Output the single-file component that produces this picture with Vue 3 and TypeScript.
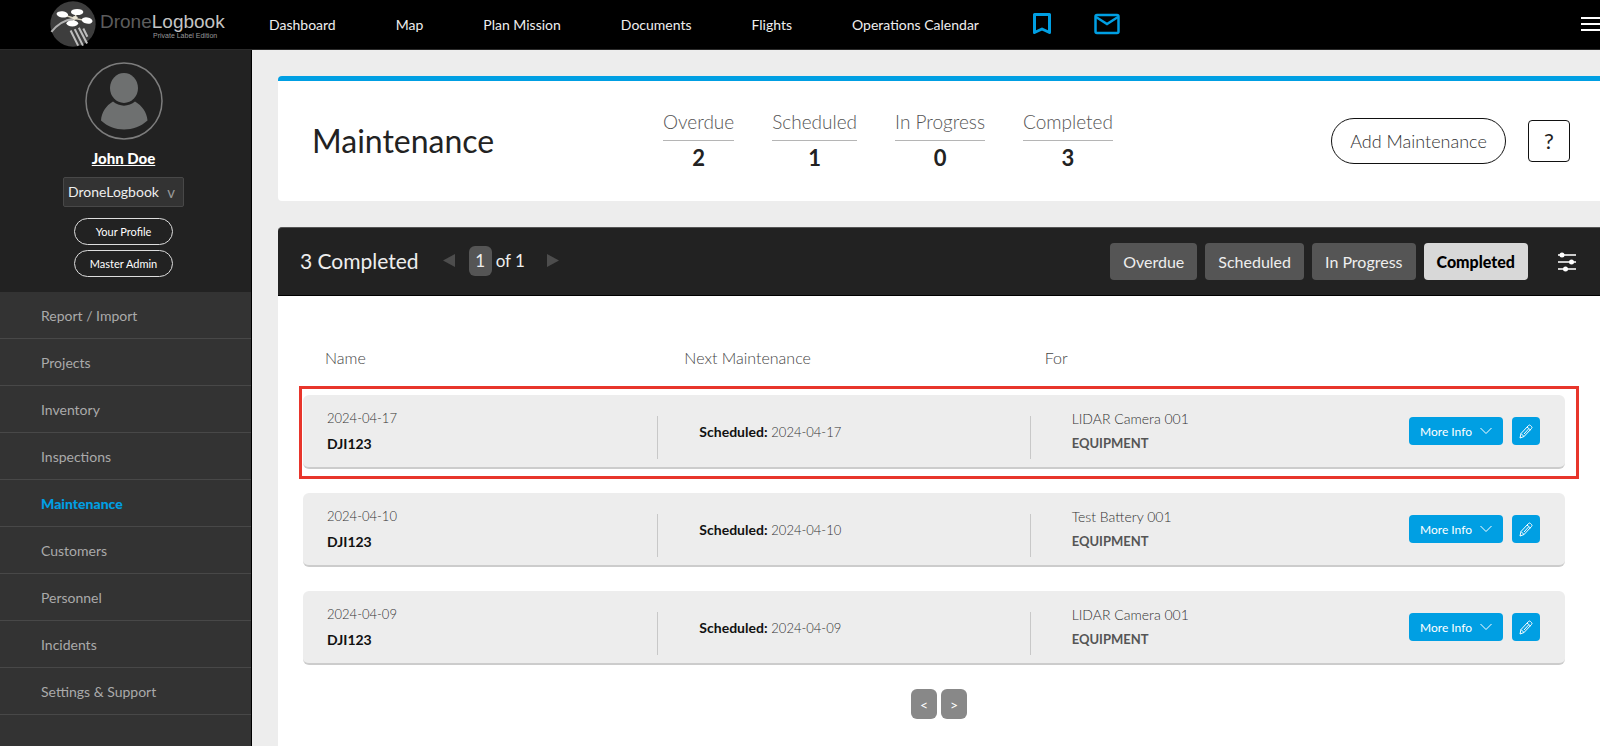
<script setup lang="ts">
import { ref } from 'vue'

interface Stat {
  label: string
  count: number
}

interface MaintenanceRow {
  date: string
  name: string
  target: string
  kind: string
  highlighted: boolean
}

const navLinks: string[] = ['Dashboard', 'Map', 'Plan Mission', 'Documents', 'Flights', 'Operations Calendar']

const menuItems: string[] = [
  'Report / Import',
  'Projects',
  'Inventory',
  'Inspections',
  'Maintenance',
  'Customers',
  'Personnel',
  'Incidents',
  'Settings & Support',
]

const stats: Stat[] = [
  { label: 'Overdue', count: 2 },
  { label: 'Scheduled', count: 1 },
  { label: 'In Progress', count: 0 },
  { label: 'Completed', count: 3 },
]

const rows: MaintenanceRow[] = [
  { date: '2024-04-17', name: 'DJI123', target: 'LIDAR Camera 001', kind: 'EQUIPMENT', highlighted: true },
  { date: '2024-04-10', name: 'DJI123', target: 'Test Battery 001', kind: 'EQUIPMENT', highlighted: false },
  { date: '2024-04-09', name: 'DJI123', target: 'LIDAR Camera 001', kind: 'EQUIPMENT', highlighted: false },
]

const activeMenu = ref('Maintenance')
const activeTab = ref('Completed')
const company = ref('DroneLogbook')
</script>

<template>
  <div class="page">
    <header class="topbar">
      <a class="brand" href="#">
        <svg class="brand-mark" viewBox="0 0 134 134" aria-hidden="true">
          <circle cx="67" cy="67" r="66" fill="#3d3d3d" />
          <path d="M4 90C20 70 40 56 68 52" fill="none" stroke="#b0b0b0" stroke-width="6" />
          <path d="M60 86l22 44M72 82l24 48M84 78l24 46M97 80l12 24" stroke="#bdbdbd" stroke-width="6" />
          <path d="M36 39l36 12 34 6M78 34L66 64" fill="none" stroke="#d8d2be" stroke-width="4" />
          <ellipse cx="36" cy="39" rx="17" ry="9" fill="#fff" transform="rotate(8 36 39)" />
          <ellipse cx="79" cy="32" rx="18" ry="9" fill="#fff" />
          <ellipse cx="108" cy="57" rx="16" ry="9" fill="#fff" transform="rotate(10 108 57)" />
          <ellipse cx="65" cy="65" rx="17" ry="9" fill="#fff" />
          <ellipse cx="73" cy="49" rx="8" ry="5" fill="#e9e4d4" />
        </svg>
        <span class="brand-text">
          <span class="brand-name"><span class="brand-dim">Drone</span>Logbook</span>
          <span class="brand-sub">Private Label Edition</span>
        </span>
      </a>
      <nav class="topnav" aria-label="Main">
        <div class="links">
          <a v-for="link in navLinks" :key="link" href="#">{{ link }}</a>
        </div>
        <div class="icons">
          <a href="#" aria-label="Bookmarks">
            <svg width="20" height="24" viewBox="0 0 20 24" aria-hidden="true">
              <path d="M2.500 2.500h15v18L10 17l-7.500 3.500z" fill="none" stroke="#009fe3" stroke-width="3" stroke-linejoin="round" />
            </svg>
          </a>
          <a href="#" aria-label="Messages">
            <svg width="26" height="22" viewBox="0 0 26 22" fill="none" stroke="#009fe3" stroke-width="2.500" aria-hidden="true">
              <rect x="1.500" y="2" width="23" height="18" rx="1.500" />
              <path d="M2 4l11 7 11-7" />
            </svg>
          </a>
        </div>
      </nav>
      <button class="burger" type="button" aria-label="Open menu">
        <svg width="19" height="14" viewBox="0 0 19 14" stroke="#fff" stroke-width="2" aria-hidden="true">
          <path d="M0 1h19M0 7h19M0 13h19" />
        </svg>
      </button>
    </header>

    <div class="body">
      <aside class="sidebar">
        <div class="profile">
          <svg class="avatar" viewBox="0 0 78 78" aria-hidden="true">
            <circle cx="39" cy="39" r="38" fill="none" stroke="#7d7d7d" stroke-width="1.500" />
            <ellipse cx="39" cy="26" rx="14" ry="15" fill="#6e7070" />
            <path d="M28 39.500c6 5.500 16 5.500 22 0 7 4 12 11 12.500 19-13 12-34 12-46.500 0C16.500 50.500 21 43.500 28 39.500z" fill="#6e7070" />
          </svg>
          <a class="user" href="#">John Doe</a>
          <div class="company">
            <select v-model="company" aria-label="Company">
              <option>DroneLogbook</option>
            </select>
            <span class="caret" aria-hidden="true">v</span>
          </div>
          <button class="pill" type="button">Your Profile</button>
          <button class="pill" type="button">Master Admin</button>
        </div>
        <nav class="menu" aria-label="Sections">
          <a
            v-for="item in menuItems"
            :key="item"
            href="#"
            :class="{ active: item === activeMenu }"
            @click.prevent="activeMenu = item"
          >{{ item }}</a>
        </nav>
      </aside>

      <main class="content">
        <section class="summary">
          <h1>Maintenance</h1>
          <dl class="stats">
            <div v-for="stat in stats" :key="stat.label" class="stat">
              <dt>{{ stat.label }}</dt>
              <dd>{{ stat.count }}</dd>
            </div>
          </dl>
          <button class="add" type="button">Add Maintenance</button>
          <button class="help" type="button">?</button>
        </section>

        <section class="panel">
          <div class="toolbar">
            <h2>3 Completed</h2>
            <div class="pages">
              <button class="arrow" type="button" aria-label="Previous page">
                <svg width="12" height="14" viewBox="0 0 12 14" fill="#4d4d4d" aria-hidden="true"><path d="M12 0v13L0 6.500z" /></svg>
              </button>
              <span class="page-now">1</span>
              <span class="page-total">of 1</span>
              <button class="arrow" type="button" aria-label="Next page">
                <svg width="12" height="14" viewBox="0 0 12 14" fill="#4d4d4d" aria-hidden="true"><path d="M0 0v13l12-6.500z" /></svg>
              </button>
            </div>
            <div class="tabs">
              <button
                v-for="stat in stats"
                :key="stat.label"
                type="button"
                :class="{ active: stat.label === activeTab }"
                @click="activeTab = stat.label"
              >{{ stat.label }}</button>
            </div>
            <button class="filters" type="button" aria-label="Filters">
              <svg width="18" height="20" viewBox="0 0 18 20" aria-hidden="true">
                <path d="M0 3h18M0 10h18M0 17h18" stroke="#ccc" stroke-width="2" />
                <circle cx="4" cy="3" r="2.500" fill="#fff" />
                <circle cx="13.500" cy="10" r="2.500" fill="#fff" />
                <circle cx="7.500" cy="17" r="2.500" fill="#fff" />
              </svg>
            </button>
          </div>

          <div class="list">
            <table>
              <colgroup>
                <col class="col-name" />
                <col class="col-next" />
                <col class="col-for" />
                <col class="col-actions" />
              </colgroup>
              <thead>
                <tr>
                  <th scope="col" class="name">Name</th>
                  <th scope="col" class="next">Next Maintenance</th>
                  <th scope="col" class="for">For</th>
                  <td></td>
                </tr>
              </thead>
              <tbody>
                <tr v-for="row in rows" :key="row.date" :class="{ highlighted: row.highlighted }">
                  <td class="name">
                    <time>{{ row.date }}</time>
                    <strong>{{ row.name }}</strong>
                  </td>
                  <td class="next divided"><b>Scheduled:</b> <time>{{ row.date }}</time></td>
                  <td class="for divided">
                    <span>{{ row.target }}</span>
                    <strong>{{ row.kind }}</strong>
                  </td>
                  <td class="actions">
                    <div class="action-bar">
                      <button class="more" type="button">
                        More Info
                        <svg width="12" height="8" viewBox="0 0 12 8" fill="none" stroke="#fff" aria-hidden="true"><path d="M0.500 1L6 6.500 11.500 1" /></svg>
                      </button>
                      <button class="edit" type="button" aria-label="Edit">
                        <svg width="14" height="15" viewBox="0 0 14 15" fill="none" stroke="#fff" stroke-linejoin="round" aria-hidden="true">
                          <path d="M1 14l1-4.500L9.500 1.500q1-1 2 0l1 1q1 1 0 2L5 12.500zM8 3l3.500 3M2 9.500l3 3M9.500 5L5 10" />
                        </svg>
                      </button>
                    </div>
                  </td>
                </tr>
              </tbody>
            </table>
          </div>
          <div class="pager">
            <button type="button" aria-label="Previous">&lt;</button>
            <button type="button" aria-label="Next">&gt;</button>
          </div>
        </section>
      </main>
    </div>
  </div>
</template>

<style>
body {
  margin: 0;
  background: #ededed;
}
</style>

<style scoped>
.page {
  display: flex;
  flex-direction: column;
  min-height: 100vh;
  font-family: Lato, 'Open Sans', sans-serif;
  font-size: 14px;
  color: #222;
}

.page *,
.page *::after {
  box-sizing: border-box;
}

button,
select {
  margin: 0;
  padding: 0;
  border: 0;
  background: none;
  font-family: inherit;
  color: inherit;
  white-space: nowrap;
  cursor: pointer;
}

a {
  color: inherit;
  text-decoration: none;
}

svg {
  display: block;
}

/* Top bar */
.topbar {
  display: flex;
  align-items: center;
  height: 50px;
  padding-bottom: 1px;
  background: #000;
  border-bottom: 1px solid #2b2b2b;
  color: #eee;
}

.brand {
  display: flex;
  align-items: center;
  gap: 4px;
  width: 269px;
  padding-left: 50px;
  font-family: 'Liberation Sans', sans-serif;
}

.brand-mark {
  width: 46px;
  height: 46px;
}

.brand-text {
  display: flex;
  flex-direction: column;
  padding-top: 4px;
}

.brand-name {
  font-size: 19px;
  line-height: 20px;
  color: #c4c4c4;
}

.brand-dim {
  color: #5c5c5c;
}

.brand-sub {
  padding-left: 53px;
  font-size: 7px;
  line-height: 8px;
  color: #999;
}

.topnav {
  display: flex;
  flex: 1;
  align-items: center;
  gap: 53px;
  white-space: nowrap;
}

.links,
.icons {
  display: flex;
  align-items: center;
}

.links {
  gap: 60px;
}

.icons {
  gap: 42px;
}

/* Sidebar */
.body {
  display: flex;
  flex: 1;
}

.sidebar {
  flex: none;
  width: 252px;
  background: #333;
  border-right: 1px solid #000;
}

.profile {
  display: flex;
  flex-direction: column;
  align-items: center;
  padding: 12px 4px 15px 0;
  background: #222;
  color: #fff;
}

.avatar {
  width: 78px;
  height: 78px;
}

.user {
  margin-top: 8px;
  font-size: 15px;
  font-weight: 900;
  line-height: 20px;
  text-decoration: underline;
}

.company {
  position: relative;
  width: 121px;
  margin: 9px 0 6px;
}

.company select {
  appearance: none;
  width: 100%;
  height: 30px;
  padding: 0 18px 2px 4px;
  border: 1px solid #484848;
  border-radius: 2px;
  background: #333;
  font-size: 14px;
  color: #eee;
}

.caret {
  position: absolute;
  right: 9px;
  top: 6px;
  font-size: 15px;
  line-height: 18px;
  color: #999;
  pointer-events: none;
}

.pill {
  width: 99px;
  height: 27px;
  margin-top: 5px;
  border: 1px solid #ddd;
  border-radius: 14px;
  font-size: 11px;
  color: #fff;
}

.menu a {
  display: block;
  height: 47px;
  padding-left: 41px;
  border-bottom: 1px solid #484848;
  font-size: 14px;
  line-height: 47px;
  color: #aaa;
}

.menu a.active {
  font-weight: 900;
  color: #009fe3;
}

/* Summary card */
.content {
  flex: 1;
  display: flex;
  flex-direction: column;
  gap: 26px;
  min-width: 0;
  padding: 26px 0 0 26px;
  background: #ededed;
}

.summary {
  display: flex;
  align-items: center;
  height: 125px;
  padding: 0 30px 1px 34px;
  border-top: 5px solid #009fe3;
  border-radius: 4px 0 0 4px;
  background: #fff;
}

h1 {
  flex: none;
  width: 351px;
  margin: 0;
  font-size: 32px;
  font-weight: 400;
  line-height: 40px;
}

.stats {
  display: flex;
  gap: 38px;
  margin: 0;
  text-align: center;
}

.stat dt {
  padding-bottom: 6px;
  border-bottom: 1px solid #b5b5b5;
  font-size: 19px;
  font-weight: 300;
  line-height: 24px;
  color: #555;
}

.stat dd {
  margin: 4px 0 0;
  font-size: 22px;
  font-weight: 700;
  line-height: 26px;
}

.add {
  width: 175px;
  height: 46px;
  margin-left: auto;
  border: 1px solid #111;
  border-radius: 23px;
  font-size: 18px;
  font-weight: 300;
  color: #333;
}

.help {
  width: 42px;
  height: 42px;
  margin-left: 22px;
  border: 1px solid #111;
  border-radius: 4px;
  font-size: 22px;
}

/* List panel */
.panel {
  flex: 1;
  border-radius: 4px 0 0 0;
  background: #fff;
}

.toolbar {
  display: flex;
  align-items: center;
  height: 69px;
  padding: 0 24px 0 22px;
  border-top: 1px solid #555;
  border-bottom: 1px solid #000;
  border-radius: 4px 0 0 0;
  background: #222;
  color: #eee;
}

h2 {
  margin: 0;
  padding-bottom: 2px;
  font-size: 21px;
  font-weight: 400;
  line-height: 28px;
}

.pages {
  display: flex;
  align-items: center;
  margin-left: 24px;
  padding-bottom: 2px;
  font-size: 17px;
}

.page-now {
  width: 23px;
  margin: 0 4px 0 14px;
  border-radius: 6px;
  background: #555;
  line-height: 30px;
  text-align: center;
}

.page-total {
  margin-right: 22px;
}

.tabs {
  display: flex;
  gap: 8px;
  margin-left: auto;
}

.tabs button {
  height: 37px;
  padding: 0 13px;
  border-radius: 4px;
  background: #555;
  font-size: 16px;
}

.tabs button.active {
  background: #d8d8d8;
  font-weight: 900;
  color: #000;
}

.filters {
  margin-left: 30px;
}

.list {
  padding: 38px 35px 0 25px;
}

table {
  width: 100%;
  table-layout: fixed;
  border-collapse: separate;
  border-spacing: 0 24px;
  margin: -13px 0 0;
}

.col-name {
  width: 28%;
}

.col-next {
  width: 29.5%;
}

.col-for {
  width: 26%;
}

th,
td {
  padding: 0;
  text-align: left;
}

th {
  height: 26px;
  font-size: 16px;
  font-weight: 300;
  line-height: 26px;
  color: #444;
}

th.name {
  padding-left: 22px;
}

th.next {
  padding-left: 28px;
}

th.for {
  padding-left: 16px;
}

tbody tr {
  position: relative;
}

tbody td {
  height: 74px;
  border-bottom: 2px solid #ccc;
  background: #ededed;
  font-size: 14px;
  font-weight: 300;
  color: #333;
}

tbody td:first-child {
  border-radius: 6px 0 0 6px;
}

tbody td:last-child {
  border-radius: 0 6px 6px 0;
}

tbody time {
  font-size: 13px;
}

tbody b,
tbody strong {
  font-weight: 700;
}

td.name time,
td.for span,
tbody strong {
  display: block;
  line-height: 25px;
}

tbody td.name {
  padding-left: 24px;
}

td.name strong {
  color: #111;
}

tbody td.next {
  padding-left: 43px;
}

td.next b {
  color: #111;
}

tbody td.for {
  padding-left: 43px;
}

td.for strong {
  font-size: 13px;
  color: #555;
}

tbody td.divided {
  background: linear-gradient(#c8c8c8, #c8c8c8) no-repeat 1px 21px / 1px 43px #ededed;
}

.highlighted .actions::after {
  content: '';
  position: absolute;
  inset: -9px -14px -10px -4px;
  border: 3px solid #e8352b;
  pointer-events: none;
}

.action-bar {
  display: flex;
  justify-content: flex-end;
  gap: 9px;
  padding-right: 25px;
}

.more,
.edit {
  display: flex;
  align-items: center;
  justify-content: center;
  height: 28px;
  border-radius: 4px;
  background: #009fe3;
  color: #fff;
}

.more {
  gap: 8px;
  width: 94px;
  font-size: 12px;
}

.edit {
  width: 28px;
}

.pager {
  display: flex;
  justify-content: center;
  gap: 4px;
  padding-bottom: 24px;
}

.pager button {
  width: 26px;
  height: 30px;
  border-radius: 6px;
  background: #888;
  font-size: 14px;
  color: #fff;
}
</style>
